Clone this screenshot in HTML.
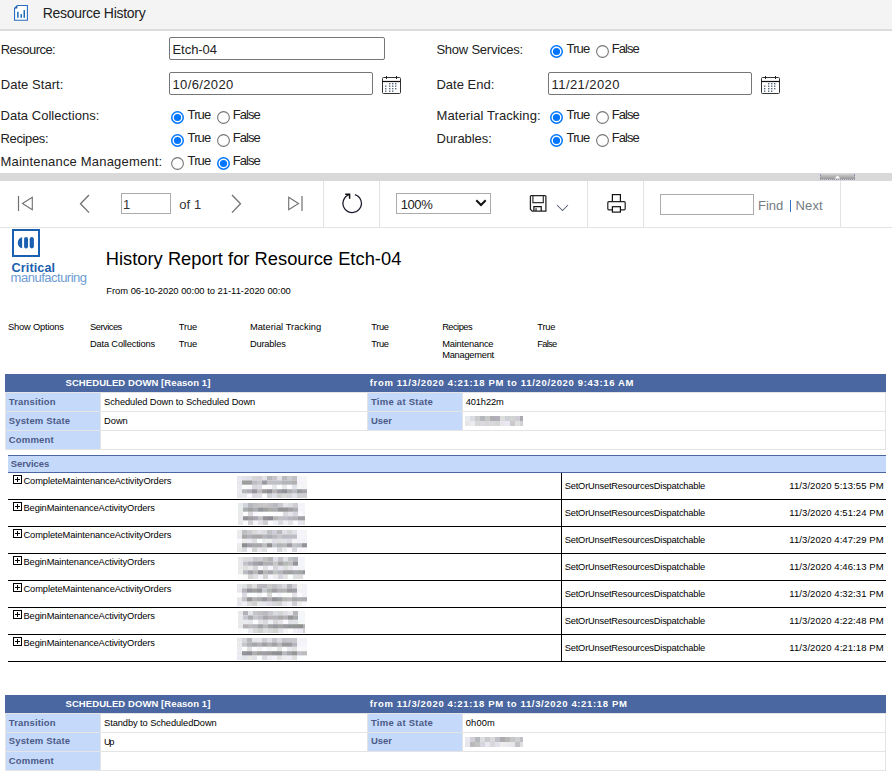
<!DOCTYPE html>
<html><head><meta charset="utf-8"><style>
html,body{margin:0;padding:0;background:#fff;width:892px;height:782px;overflow:hidden;position:relative}
body{font-family:"Liberation Sans", sans-serif}
.t{position:absolute;white-space:nowrap}
.r{position:absolute;display:block}
</style></head><body>
<div class="r" style="left:0px;top:0px;width:892px;height:29px;background:#f4f4f4"></div>
<div class="r" style="left:0px;top:29px;width:892px;height:2px;background:#dcdcdc"></div>
<svg class="r" style="left:14px;top:5px" width="15" height="17" viewBox="0 0 15 17"><path d="M3.3 0.55 H13.4 V15.25 H0.55 V3.3 Z" fill="#fff" stroke="#2a6cc0" stroke-width="1.1"/><path d="M0.5 3.4 L3.4 0.5 L3.4 3.4 Z" fill="#1f5faf"/><rect x="3.1" y="6.8" width="1.5" height="6" fill="#1f6bb8"/><rect x="6.5" y="9.1" width="1.5" height="3.7" fill="#1f6bb8"/><rect x="9.5" y="5.1" width="1.5" height="7.7" fill="#1f6bb8"/></svg>
<div class="t" style="left:42.70px;top:6px;font-size:14px;line-height:14px;color:#222;font-weight:400;letter-spacing:-0.293px;">Resource History</div>
<div class="t" style="left:0.70px;top:43px;font-size:13px;line-height:13px;color:#222;font-weight:400;letter-spacing:-0.525px;">Resource:</div>
<div class="r" style="left:169px;top:37px;width:216px;height:23px;border:1px solid #767676;border-radius:2px;box-sizing:border-box;background:#fff"></div>
<div class="t" style="left:172.50px;top:43px;font-size:13px;line-height:13px;color:#222;font-weight:400;letter-spacing:-0.050px;">Etch-04</div>
<div class="t" style="left:436.40px;top:43px;font-size:13px;line-height:13px;color:#222;font-weight:400;letter-spacing:-0.223px;">Show Services:</div>
<svg class="r" style="left:550px;top:45px" width="13" height="13" viewBox="0 0 13 13"><circle cx="6.5" cy="6.5" r="5.75" fill="#fff" stroke="#0075ff" stroke-width="1.5"/><circle cx="6.5" cy="6.5" r="3.6" fill="#0075ff"/></svg>
<div class="t" style="left:566.50px;top:42px;font-size:13px;line-height:13px;color:#222;font-weight:400;letter-spacing:-0.833px;">True</div>
<svg class="r" style="left:596px;top:45px" width="13" height="13" viewBox="0 0 13 13"><circle cx="6.5" cy="6.5" r="5.9" fill="#fff" stroke="#767676" stroke-width="1.1"/></svg>
<div class="t" style="left:611.70px;top:42px;font-size:13px;line-height:13px;color:#222;font-weight:400;letter-spacing:-0.925px;">False</div>
<div class="t" style="left:0.70px;top:78px;font-size:13px;line-height:13px;color:#222;font-weight:400;letter-spacing:0.050px;">Date Start:</div>
<div class="r" style="left:169px;top:72px;width:204px;height:23px;border:1px solid #767676;border-radius:2px;box-sizing:border-box;background:#fff"></div>
<div class="t" style="left:172.50px;top:78px;font-size:13px;line-height:13px;color:#222;font-weight:400;letter-spacing:0.363px;">10/6/2020</div>
<svg class="r" style="left:382px;top:76px" width="20" height="19" viewBox="0 0 20 19"><rect x="0.5" y="1.5" width="18" height="16" rx="1" fill="#fff" stroke="#333" stroke-width="1"/><line x1="0.5" y1="5.5" x2="18.5" y2="5.5" stroke="#111" stroke-width="1.2"/><line x1="4.5" y1="0" x2="4.5" y2="3" stroke="#222" stroke-width="1"/><line x1="14.5" y1="0" x2="14.5" y2="3" stroke="#222" stroke-width="1"/><rect x="7" y="7.0" width="1.4" height="1.4" fill="#5a6a80"/><rect x="10" y="7.0" width="1.4" height="1.4" fill="#5a6a80"/><rect x="13" y="7.0" width="1.4" height="1.4" fill="#5a6a80"/><rect x="3" y="9.5" width="1.4" height="1.4" fill="#5a6a80"/><rect x="7" y="9.5" width="1.4" height="1.4" fill="#5a6a80"/><rect x="10" y="9.5" width="1.4" height="1.4" fill="#5a6a80"/><rect x="13" y="9.5" width="1.4" height="1.4" fill="#5a6a80"/><rect x="3" y="12.0" width="1.4" height="1.4" fill="#5a6a80"/><rect x="7" y="12.0" width="1.4" height="1.4" fill="#5a6a80"/><rect x="10" y="12.0" width="1.4" height="1.4" fill="#5a6a80"/><rect x="13" y="12.0" width="1.4" height="1.4" fill="#5a6a80"/><rect x="3" y="14.5" width="1.4" height="1.4" fill="#5a6a80"/><rect x="7" y="14.5" width="1.4" height="1.4" fill="#5a6a80"/><rect x="10" y="14.5" width="1.4" height="1.4" fill="#5a6a80"/></svg>
<div class="t" style="left:436.40px;top:78px;font-size:13px;line-height:13px;color:#222;font-weight:400;letter-spacing:0.025px;">Date End:</div>
<div class="r" style="left:548px;top:72px;width:204px;height:23px;border:1px solid #767676;border-radius:2px;box-sizing:border-box;background:#fff"></div>
<div class="t" style="left:551.60px;top:78px;font-size:13px;line-height:13px;color:#222;font-weight:400;letter-spacing:0.422px;">11/21/2020</div>
<svg class="r" style="left:761px;top:76px" width="20" height="19" viewBox="0 0 20 19"><rect x="0.5" y="1.5" width="18" height="16" rx="1" fill="#fff" stroke="#333" stroke-width="1"/><line x1="0.5" y1="5.5" x2="18.5" y2="5.5" stroke="#111" stroke-width="1.2"/><line x1="4.5" y1="0" x2="4.5" y2="3" stroke="#222" stroke-width="1"/><line x1="14.5" y1="0" x2="14.5" y2="3" stroke="#222" stroke-width="1"/><rect x="7" y="7.0" width="1.4" height="1.4" fill="#5a6a80"/><rect x="10" y="7.0" width="1.4" height="1.4" fill="#5a6a80"/><rect x="13" y="7.0" width="1.4" height="1.4" fill="#5a6a80"/><rect x="3" y="9.5" width="1.4" height="1.4" fill="#5a6a80"/><rect x="7" y="9.5" width="1.4" height="1.4" fill="#5a6a80"/><rect x="10" y="9.5" width="1.4" height="1.4" fill="#5a6a80"/><rect x="13" y="9.5" width="1.4" height="1.4" fill="#5a6a80"/><rect x="3" y="12.0" width="1.4" height="1.4" fill="#5a6a80"/><rect x="7" y="12.0" width="1.4" height="1.4" fill="#5a6a80"/><rect x="10" y="12.0" width="1.4" height="1.4" fill="#5a6a80"/><rect x="13" y="12.0" width="1.4" height="1.4" fill="#5a6a80"/><rect x="3" y="14.5" width="1.4" height="1.4" fill="#5a6a80"/><rect x="7" y="14.5" width="1.4" height="1.4" fill="#5a6a80"/><rect x="10" y="14.5" width="1.4" height="1.4" fill="#5a6a80"/></svg>
<div class="t" style="left:0.50px;top:109px;font-size:13px;line-height:13px;color:#222;font-weight:400;letter-spacing:0.037px;">Data Collections:</div>
<svg class="r" style="left:171px;top:111px" width="13" height="13" viewBox="0 0 13 13"><circle cx="6.5" cy="6.5" r="5.75" fill="#fff" stroke="#0075ff" stroke-width="1.5"/><circle cx="6.5" cy="6.5" r="3.6" fill="#0075ff"/></svg>
<div class="t" style="left:187.50px;top:108px;font-size:13px;line-height:13px;color:#222;font-weight:400;letter-spacing:-0.833px;">True</div>
<svg class="r" style="left:217px;top:111px" width="13" height="13" viewBox="0 0 13 13"><circle cx="6.5" cy="6.5" r="5.9" fill="#fff" stroke="#767676" stroke-width="1.1"/></svg>
<div class="t" style="left:232.70px;top:108px;font-size:13px;line-height:13px;color:#222;font-weight:400;letter-spacing:-0.925px;">False</div>
<div class="t" style="left:436.60px;top:109px;font-size:13px;line-height:13px;color:#222;font-weight:400;letter-spacing:0.082px;">Material Tracking:</div>
<svg class="r" style="left:550px;top:111px" width="13" height="13" viewBox="0 0 13 13"><circle cx="6.5" cy="6.5" r="5.75" fill="#fff" stroke="#0075ff" stroke-width="1.5"/><circle cx="6.5" cy="6.5" r="3.6" fill="#0075ff"/></svg>
<div class="t" style="left:566.50px;top:108px;font-size:13px;line-height:13px;color:#222;font-weight:400;letter-spacing:-0.833px;">True</div>
<svg class="r" style="left:596px;top:111px" width="13" height="13" viewBox="0 0 13 13"><circle cx="6.5" cy="6.5" r="5.9" fill="#fff" stroke="#767676" stroke-width="1.1"/></svg>
<div class="t" style="left:611.70px;top:108px;font-size:13px;line-height:13px;color:#222;font-weight:400;letter-spacing:-0.925px;">False</div>
<div class="t" style="left:0.50px;top:132px;font-size:13px;line-height:13px;color:#222;font-weight:400;letter-spacing:-0.357px;">Recipes:</div>
<svg class="r" style="left:171px;top:134px" width="13" height="13" viewBox="0 0 13 13"><circle cx="6.5" cy="6.5" r="5.75" fill="#fff" stroke="#0075ff" stroke-width="1.5"/><circle cx="6.5" cy="6.5" r="3.6" fill="#0075ff"/></svg>
<div class="t" style="left:187.50px;top:131px;font-size:13px;line-height:13px;color:#222;font-weight:400;letter-spacing:-0.833px;">True</div>
<svg class="r" style="left:217px;top:134px" width="13" height="13" viewBox="0 0 13 13"><circle cx="6.5" cy="6.5" r="5.9" fill="#fff" stroke="#767676" stroke-width="1.1"/></svg>
<div class="t" style="left:232.70px;top:131px;font-size:13px;line-height:13px;color:#222;font-weight:400;letter-spacing:-0.925px;">False</div>
<div class="t" style="left:436.60px;top:132px;font-size:13px;line-height:13px;color:#222;font-weight:400;letter-spacing:-0.050px;">Durables:</div>
<svg class="r" style="left:550px;top:134px" width="13" height="13" viewBox="0 0 13 13"><circle cx="6.5" cy="6.5" r="5.75" fill="#fff" stroke="#0075ff" stroke-width="1.5"/><circle cx="6.5" cy="6.5" r="3.6" fill="#0075ff"/></svg>
<div class="t" style="left:566.50px;top:131px;font-size:13px;line-height:13px;color:#222;font-weight:400;letter-spacing:-0.833px;">True</div>
<svg class="r" style="left:596px;top:134px" width="13" height="13" viewBox="0 0 13 13"><circle cx="6.5" cy="6.5" r="5.9" fill="#fff" stroke="#767676" stroke-width="1.1"/></svg>
<div class="t" style="left:611.70px;top:131px;font-size:13px;line-height:13px;color:#222;font-weight:400;letter-spacing:-0.925px;">False</div>
<div class="t" style="left:0.50px;top:155px;font-size:13px;line-height:13px;color:#222;font-weight:400;letter-spacing:0.186px;">Maintenance Management:</div>
<svg class="r" style="left:171px;top:157px" width="13" height="13" viewBox="0 0 13 13"><circle cx="6.5" cy="6.5" r="5.9" fill="#fff" stroke="#767676" stroke-width="1.1"/></svg>
<div class="t" style="left:187.50px;top:154px;font-size:13px;line-height:13px;color:#222;font-weight:400;letter-spacing:-0.833px;">True</div>
<svg class="r" style="left:217px;top:157px" width="13" height="13" viewBox="0 0 13 13"><circle cx="6.5" cy="6.5" r="5.75" fill="#fff" stroke="#0075ff" stroke-width="1.5"/><circle cx="6.5" cy="6.5" r="3.6" fill="#0075ff"/></svg>
<div class="t" style="left:232.70px;top:154px;font-size:13px;line-height:13px;color:#222;font-weight:400;letter-spacing:-0.925px;">False</div>
<div class="r" style="left:0px;top:173px;width:892px;height:8px;background:#d9d9d9"></div>
<div class="r" style="left:820px;top:174px;width:35px;height:6px;background:linear-gradient(#d0d0d0,#989898);border:1px dotted #9a92b4;border-top:none;box-sizing:border-box"></div>
<svg class="r" style="left:834px;top:174.5px" width="7" height="4"><path d="M0.6 3.6 L3.5 0.4 L6.4 3.6 Z" fill="#fff"/></svg>
<div class="r" style="left:0px;top:227px;width:892px;height:1px;background:#e3e3e3"></div>
<div class="r" style="left:323px;top:181px;width:1px;height:46px;background:#e3e3e3"></div>
<div class="r" style="left:379px;top:181px;width:1px;height:46px;background:#e3e3e3"></div>
<div class="r" style="left:587px;top:181px;width:1px;height:46px;background:#e3e3e3"></div>
<div class="r" style="left:643px;top:181px;width:1px;height:46px;background:#e3e3e3"></div>
<div class="r" style="left:840px;top:181px;width:1px;height:46px;background:#e3e3e3"></div>
<svg class="r" style="left:17px;top:195px" width="18" height="18" viewBox="0 0 18 18"><line x1="1.5" y1="1" x2="1.5" y2="16" stroke="#707070" stroke-width="1.2"/><path d="M5.5 8.5 L15.3 2.3 V14.7 Z" fill="none" stroke="#707070" stroke-width="1.1"/></svg>
<svg class="r" style="left:78px;top:194px" width="14" height="20" viewBox="0 0 14 20"><path d="M11 1 L2.5 9.8 L11 18.6" fill="none" stroke="#707070" stroke-width="1.3"/></svg>
<div class="r" style="left:121px;top:193px;width:50px;height:21px;border:1px solid #ababab;box-sizing:border-box;background:#fff"></div>
<div class="t" style="left:123.00px;top:198px;font-size:13px;line-height:13px;color:#333;font-weight:400;letter-spacing:0.000px;">1</div>
<div class="t" style="left:179.30px;top:198px;font-size:13px;line-height:13px;color:#333;font-weight:400;letter-spacing:0.067px;">of 1</div>
<svg class="r" style="left:229px;top:194px" width="14" height="20" viewBox="0 0 14 20"><path d="M3 1 L11.5 9.8 L3 18.6" fill="none" stroke="#707070" stroke-width="1.3"/></svg>
<svg class="r" style="left:286px;top:195px" width="18" height="18" viewBox="0 0 18 18"><path d="M2.7 2.3 L12.5 8.5 L2.7 14.7 Z" fill="none" stroke="#707070" stroke-width="1.1"/><line x1="16" y1="1" x2="16" y2="16" stroke="#707070" stroke-width="1.2"/></svg>
<svg class="r" style="left:340px;top:192px" width="24" height="23" viewBox="0 0 24 23"><path d="M9.3 2.6 A9.2 9.2 0 1 0 14.9 2.55" fill="none" stroke="#1a1a2a" stroke-width="1.25"/><path d="M5.2 2.3 H9.6 V6.7" fill="none" stroke="#111" stroke-width="1.5" stroke-linejoin="miter"/></svg>
<div class="r" style="left:396px;top:193px;width:95px;height:21px;border:1px solid #ababab;box-sizing:border-box;background:#fff"></div>
<div class="t" style="left:400.70px;top:198px;font-size:13px;line-height:13px;color:#222;font-weight:400;letter-spacing:-0.400px;">100%</div>
<svg class="r" style="left:475px;top:199px" width="12" height="8" viewBox="0 0 12 8"><path d="M1.3 1.3 L6 6 L10.7 1.3" fill="none" stroke="#111" stroke-width="2"/></svg>
<svg class="r" style="left:529px;top:194px" width="19" height="19" viewBox="0 0 19 19"><path d="M2.3 1.6 H16 Q16.9 1.6 16.9 2.5 V17.1 H3.2 L1.4 15.3 V2.5 Q1.4 1.6 2.3 1.6 Z" fill="#fff" stroke="#222" stroke-width="1.25"/><path d="M3.9 1.8 V8.6 H14.3 V1.8" fill="none" stroke="#333" stroke-width="1.2"/><path d="M4.9 17 V12.7 H12.2 V17" fill="none" stroke="#111" stroke-width="1.2"/><rect x="6.4" y="14.2" width="1.3" height="2.9" fill="#333"/></svg>
<svg class="r" style="left:556px;top:204px" width="13" height="8" viewBox="0 0 13 8"><path d="M1 1 L6.5 6.5 L12 1" fill="none" stroke="#556070" stroke-width="1.05"/></svg>
<svg class="r" style="left:606px;top:193px" width="21" height="21" viewBox="0 0 21 21"><rect x="6.4" y="1.6" width="8" height="7.5" fill="#fff" stroke="#111" stroke-width="1.2"/><rect x="1.8" y="8.7" width="17.4" height="8.1" rx="1" fill="#fff" stroke="#222" stroke-width="1.2"/><rect x="6.4" y="13.7" width="8" height="5.4" fill="#fff" stroke="#111" stroke-width="1.2"/></svg>
<div class="r" style="left:660px;top:194px;width:94px;height:21px;border:1px solid #ababab;box-sizing:border-box;background:#fff"></div>
<div class="t" style="left:758.00px;top:199px;font-size:13px;line-height:13px;color:#737b84;font-weight:400;letter-spacing:0.000px;">Find</div>
<div class="r" style="left:789.5px;top:199.5px;width:1.6px;height:12.5px;background:#2f72c0"></div>
<div class="t" style="left:795.50px;top:199px;font-size:13px;line-height:13px;color:#737b84;font-weight:400;letter-spacing:0.167px;">Next</div>
<div class="r" style="left:12px;top:229px;width:28px;height:28px;border:2.1px solid #1a60b0;box-sizing:border-box"></div>
<svg class="r" style="left:17px;top:236px" width="18" height="14" viewBox="0 0 18 14"><path d="M5.1 1.3 A4.3 5.45 0 0 0 5.1 12.2 Z" fill="#1a60b0"/><rect x="7.1" y="0.9" width="3.9" height="11.5" rx="1.95" fill="#1a60b0"/><rect x="12.7" y="1.1" width="4.2" height="11.3" rx="2.1" fill="#1a60b0"/></svg>
<div class="t" style="left:11.60px;top:262px;font-size:12.6px;line-height:12.6px;color:#1a60b0;font-weight:700;letter-spacing:0.114px;">Critical</div>
<div class="t" style="left:10.60px;top:271px;font-size:13px;line-height:13px;color:#6d9cd3;font-weight:400;letter-spacing:-0.492px;">manufacturing</div>
<div class="t" style="left:105.70px;top:250px;font-size:18.3px;line-height:18.3px;color:#000;font-weight:400;letter-spacing:0.029px;">History Report for Resource Etch-04</div>
<div class="t" style="left:106.20px;top:286px;font-size:9.4px;line-height:9.4px;color:#000;font-weight:400;letter-spacing:-0.005px;">From 06-10-2020 00:00 to 21-11-2020 00:00</div>
<div class="t" style="left:7.90px;top:323px;font-size:9.3px;line-height:9.3px;color:#000;font-weight:400;letter-spacing:-0.164px;">Show Options</div>
<div class="t" style="left:90.00px;top:323px;font-size:9.3px;line-height:9.3px;color:#000;font-weight:400;letter-spacing:-0.486px;">Services</div>
<div class="t" style="left:178.80px;top:323px;font-size:9.3px;line-height:9.3px;color:#000;font-weight:400;letter-spacing:-0.167px;">True</div>
<div class="t" style="left:249.90px;top:323px;font-size:9.3px;line-height:9.3px;color:#000;font-weight:400;letter-spacing:0.031px;">Material Tracking</div>
<div class="t" style="left:371.30px;top:323px;font-size:9.3px;line-height:9.3px;color:#000;font-weight:400;letter-spacing:-0.367px;">True</div>
<div class="t" style="left:442.20px;top:323px;font-size:9.3px;line-height:9.3px;color:#000;font-weight:400;letter-spacing:-0.533px;">Recipes</div>
<div class="t" style="left:537.30px;top:323px;font-size:9.3px;line-height:9.3px;color:#000;font-weight:400;letter-spacing:-0.233px;">True</div>
<div class="t" style="left:90.00px;top:340px;font-size:9.3px;line-height:9.3px;color:#000;font-weight:400;letter-spacing:-0.173px;">Data Collections</div>
<div class="t" style="left:178.80px;top:340px;font-size:9.3px;line-height:9.3px;color:#000;font-weight:400;letter-spacing:-0.167px;">True</div>
<div class="t" style="left:249.90px;top:340px;font-size:9.3px;line-height:9.3px;color:#000;font-weight:400;letter-spacing:-0.171px;">Durables</div>
<div class="t" style="left:371.30px;top:340px;font-size:9.3px;line-height:9.3px;color:#000;font-weight:400;letter-spacing:-0.367px;">True</div>
<div class="t" style="left:442.20px;top:340px;font-size:9.3px;line-height:9.3px;color:#000;font-weight:400;letter-spacing:-0.190px;">Maintenance</div>
<div class="t" style="left:442.20px;top:351px;font-size:9.3px;line-height:9.3px;color:#000;font-weight:400;letter-spacing:-0.256px;">Management</div>
<div class="t" style="left:537.30px;top:340px;font-size:9.3px;line-height:9.3px;color:#000;font-weight:400;letter-spacing:-0.725px;">False</div>
<div class="r" style="left:5px;top:374px;width:881px;height:18px;background:#4a67a1"></div>
<div class="t" style="left:65.50px;top:378px;font-size:9.5px;line-height:9.5px;color:#fff;font-weight:700;letter-spacing:0.075px;">SCHEDULED DOWN [Reason 1]</div>
<div class="t" style="left:369.80px;top:378px;font-size:9.5px;line-height:9.5px;color:#fff;font-weight:700;letter-spacing:0.657px;">from 11/3/2020 4:21:18 PM to 11/20/2020 9:43:16 AM</div>
<div class="r" style="left:5px;top:392px;width:881px;height:58px;background:#fff;border:1px solid #e4e4e4;box-sizing:border-box"></div>
<div class="r" style="left:6px;top:393px;width:94px;height:56px;background:#c5d9fb"></div>
<div class="r" style="left:368px;top:393px;width:94px;height:37px;background:#c5d9fb"></div>
<div class="r" style="left:5px;top:411px;width:881px;height:1px;background:#e4e4e4"></div>
<div class="r" style="left:5px;top:430px;width:881px;height:1px;background:#e4e4e4"></div>
<div class="r" style="left:100px;top:392px;width:1px;height:58px;background:#e4e4e4"></div>
<div class="r" style="left:462px;top:392px;width:1px;height:38px;background:#e4e4e4"></div>
<div class="r" style="left:367px;top:392px;width:1px;height:38px;background:#e4e4e4"></div>
<div class="t" style="left:8.75px;top:397px;font-size:9.5px;line-height:9.5px;color:#4b5a86;font-weight:700;letter-spacing:0.161px;">Transition</div>
<div class="t" style="left:8.75px;top:416px;font-size:9.5px;line-height:9.5px;color:#4b5a86;font-weight:700;letter-spacing:0.141px;">System State</div>
<div class="t" style="left:8.75px;top:435px;font-size:9.5px;line-height:9.5px;color:#4b5a86;font-weight:700;letter-spacing:0.175px;">Comment</div>
<div class="t" style="left:371.00px;top:397px;font-size:9.5px;line-height:9.5px;color:#4b5a86;font-weight:700;letter-spacing:0.242px;">Time at State</div>
<div class="t" style="left:371.00px;top:416px;font-size:9.5px;line-height:9.5px;color:#4b5a86;font-weight:700;letter-spacing:-0.067px;">User</div>
<div class="t" style="left:104.10px;top:398px;font-size:9.3px;line-height:9.3px;color:#000;font-weight:400;letter-spacing:-0.077px;">Scheduled Down to Scheduled Down</div>
<div class="t" style="left:104.10px;top:417px;font-size:9.3px;line-height:9.3px;color:#000;font-weight:400;letter-spacing:-0.033px;">Down</div>
<div class="t" style="left:465.80px;top:398px;font-size:9.3px;line-height:9.3px;color:#000;font-weight:400;letter-spacing:-0.150px;">401h22m</div>
<svg class="r" style="left:465px;top:416px" width="58" height="10"><rect x="0" y="0.00" width="5" height="5.05" fill="rgb(232,235,240)"/><rect x="5" y="0.00" width="5" height="5.05" fill="rgb(218,218,225)"/><rect x="10" y="0.00" width="5" height="5.05" fill="rgb(201,204,204)"/><rect x="15" y="0.00" width="5" height="5.05" fill="rgb(180,183,188)"/><rect x="20" y="0.00" width="5" height="5.05" fill="rgb(199,201,201)"/><rect x="25" y="0.00" width="5" height="5.05" fill="rgb(175,175,179)"/><rect x="30" y="0.00" width="5" height="5.05" fill="rgb(178,175,186)"/><rect x="35" y="0.00" width="5" height="5.05" fill="rgb(220,222,220)"/><rect x="40" y="0.00" width="5" height="5.05" fill="rgb(207,207,214)"/><rect x="45" y="0.00" width="5" height="5.05" fill="rgb(210,212,212)"/><rect x="50" y="0.00" width="5" height="5.05" fill="rgb(208,205,216)"/><rect x="55" y="0.00" width="5" height="5.05" fill="rgb(173,170,173)"/><rect x="0" y="5.00" width="5" height="5.05" fill="rgb(232,230,232)"/><rect x="5" y="5.00" width="5" height="5.05" fill="rgb(235,235,240)"/><rect x="10" y="5.00" width="5" height="5.05" fill="rgb(214,215,217)"/><rect x="15" y="5.00" width="5" height="5.05" fill="rgb(219,217,223)"/><rect x="20" y="5.00" width="5" height="5.05" fill="rgb(217,214,218)"/><rect x="25" y="5.00" width="5" height="5.05" fill="rgb(215,217,219)"/><rect x="30" y="5.00" width="5" height="5.05" fill="rgb(212,213,213)"/><rect x="35" y="5.00" width="5" height="5.05" fill="rgb(231,230,236)"/><rect x="40" y="5.00" width="5" height="5.05" fill="rgb(234,232,242)"/><rect x="45" y="5.00" width="5" height="5.05" fill="rgb(204,201,205)"/><rect x="50" y="5.00" width="5" height="5.05" fill="rgb(222,225,223)"/><rect x="55" y="5.00" width="5" height="5.05" fill="rgb(211,208,215)"/></svg>
<div class="r" style="left:8px;top:455px;width:878px;height:18px;background:#c5d9fb;border-top:1px solid #4a67a1;border-bottom:1.5px solid #4a67a1;box-sizing:border-box"></div>
<div class="t" style="left:10.75px;top:459px;font-size:9.5px;line-height:9.5px;color:#4b5a86;font-weight:700;letter-spacing:-0.093px;">Services</div>
<div class="r" style="left:561px;top:473px;width:1px;height:188px;background:#000"></div>
<svg class="r" style="left:13px;top:475px" width="9" height="9" viewBox="0 0 9 9"><rect x="0.5" y="0.5" width="8" height="8" fill="#fff" stroke="#000" stroke-width="1"/><path d="M2 4.5 H7 M4.5 2 V7" stroke="#000" stroke-width="1"/></svg>
<div class="t" style="left:23.50px;top:477px;font-size:9.3px;line-height:9.3px;color:#000;font-weight:400;letter-spacing:-0.094px;">CompleteMaintenanceActivityOrders</div>
<svg class="r" style="left:237px;top:476px" width="70" height="22"><rect x="0" y="0.00" width="5" height="4.45" fill="rgb(232,232,239)"/><rect x="5" y="0.00" width="5" height="4.45" fill="rgb(228,226,234)"/><rect x="10" y="0.00" width="5" height="4.45" fill="rgb(225,224,231)"/><rect x="15" y="0.00" width="5" height="4.45" fill="rgb(211,214,212)"/><rect x="20" y="0.00" width="5" height="4.45" fill="rgb(213,210,214)"/><rect x="25" y="0.00" width="5" height="4.45" fill="rgb(226,226,230)"/><rect x="30" y="0.00" width="5" height="4.45" fill="rgb(182,184,185)"/><rect x="35" y="0.00" width="5" height="4.45" fill="rgb(200,198,204)"/><rect x="40" y="0.00" width="5" height="4.45" fill="rgb(228,226,230)"/><rect x="45" y="0.00" width="5" height="4.45" fill="rgb(188,186,193)"/><rect x="50" y="0.00" width="5" height="4.45" fill="rgb(202,204,208)"/><rect x="55" y="0.00" width="5" height="4.45" fill="rgb(192,192,199)"/><rect x="60" y="0.00" width="5" height="4.45" fill="rgb(244,243,250)"/><rect x="65" y="0.00" width="5" height="4.45" fill="rgb(244,247,245)"/><rect x="0" y="4.40" width="5" height="4.45" fill="rgb(232,229,238)"/><rect x="5" y="4.40" width="5" height="4.45" fill="rgb(155,158,157)"/><rect x="10" y="4.40" width="5" height="4.45" fill="rgb(158,156,158)"/><rect x="15" y="4.40" width="5" height="4.45" fill="rgb(188,186,195)"/><rect x="20" y="4.40" width="5" height="4.45" fill="rgb(197,199,203)"/><rect x="25" y="4.40" width="5" height="4.45" fill="rgb(154,155,162)"/><rect x="30" y="4.40" width="5" height="4.45" fill="rgb(194,191,197)"/><rect x="35" y="4.40" width="5" height="4.45" fill="rgb(191,192,199)"/><rect x="40" y="4.40" width="5" height="4.45" fill="rgb(191,190,196)"/><rect x="45" y="4.40" width="5" height="4.45" fill="rgb(179,181,184)"/><rect x="50" y="4.40" width="5" height="4.45" fill="rgb(180,183,185)"/><rect x="55" y="4.40" width="5" height="4.45" fill="rgb(176,176,176)"/><rect x="60" y="4.40" width="5" height="4.45" fill="rgb(244,241,248)"/><rect x="65" y="4.40" width="5" height="4.45" fill="rgb(244,244,248)"/><rect x="0" y="8.80" width="5" height="4.45" fill="rgb(232,235,238)"/><rect x="5" y="8.80" width="5" height="4.45" fill="rgb(252,253,255)"/><rect x="10" y="8.80" width="5" height="4.45" fill="rgb(249,248,251)"/><rect x="15" y="8.80" width="5" height="4.45" fill="rgb(215,217,220)"/><rect x="20" y="8.80" width="5" height="4.45" fill="rgb(222,219,226)"/><rect x="25" y="8.80" width="5" height="4.45" fill="rgb(252,254,253)"/><rect x="30" y="8.80" width="5" height="4.45" fill="rgb(252,249,255)"/><rect x="35" y="8.80" width="5" height="4.45" fill="rgb(231,232,234)"/><rect x="40" y="8.80" width="5" height="4.45" fill="rgb(252,255,255)"/><rect x="45" y="8.80" width="5" height="4.45" fill="rgb(233,233,233)"/><rect x="50" y="8.80" width="5" height="4.45" fill="rgb(252,249,255)"/><rect x="55" y="8.80" width="5" height="4.45" fill="rgb(224,227,232)"/><rect x="60" y="8.80" width="5" height="4.45" fill="rgb(244,246,247)"/><rect x="65" y="8.80" width="5" height="4.45" fill="rgb(244,244,245)"/><rect x="0" y="13.20" width="5" height="4.45" fill="rgb(232,234,234)"/><rect x="5" y="13.20" width="5" height="4.45" fill="rgb(181,183,188)"/><rect x="10" y="13.20" width="5" height="4.45" fill="rgb(176,173,183)"/><rect x="15" y="13.20" width="5" height="4.45" fill="rgb(152,149,159)"/><rect x="20" y="13.20" width="5" height="4.45" fill="rgb(190,187,193)"/><rect x="25" y="13.20" width="5" height="4.45" fill="rgb(157,155,158)"/><rect x="30" y="13.20" width="5" height="4.45" fill="rgb(144,142,147)"/><rect x="35" y="13.20" width="5" height="4.45" fill="rgb(183,180,184)"/><rect x="40" y="13.20" width="5" height="4.45" fill="rgb(158,155,164)"/><rect x="45" y="13.20" width="5" height="4.45" fill="rgb(144,145,150)"/><rect x="50" y="13.20" width="5" height="4.45" fill="rgb(172,172,177)"/><rect x="55" y="13.20" width="5" height="4.45" fill="rgb(186,186,194)"/><rect x="60" y="13.20" width="5" height="4.45" fill="rgb(154,155,158)"/><rect x="65" y="13.20" width="5" height="4.45" fill="rgb(168,166,171)"/><rect x="0" y="17.60" width="5" height="4.45" fill="rgb(232,229,236)"/><rect x="5" y="17.60" width="5" height="4.45" fill="rgb(231,234,235)"/><rect x="10" y="17.60" width="5" height="4.45" fill="rgb(251,248,254)"/><rect x="15" y="17.60" width="5" height="4.45" fill="rgb(220,217,226)"/><rect x="20" y="17.60" width="5" height="4.45" fill="rgb(223,220,227)"/><rect x="25" y="17.60" width="5" height="4.45" fill="rgb(252,251,252)"/><rect x="30" y="17.60" width="5" height="4.45" fill="rgb(207,210,215)"/><rect x="35" y="17.60" width="5" height="4.45" fill="rgb(224,222,230)"/><rect x="40" y="17.60" width="5" height="4.45" fill="rgb(206,208,207)"/><rect x="45" y="17.60" width="5" height="4.45" fill="rgb(220,219,220)"/><rect x="50" y="17.60" width="5" height="4.45" fill="rgb(211,214,216)"/><rect x="55" y="17.60" width="5" height="4.45" fill="rgb(226,228,233)"/><rect x="60" y="17.60" width="5" height="4.45" fill="rgb(208,210,210)"/><rect x="65" y="17.60" width="5" height="4.45" fill="rgb(211,208,216)"/></svg>
<div class="t" style="left:564.80px;top:482px;font-size:9.3px;line-height:9.3px;color:#000;font-weight:400;letter-spacing:-0.210px;">SetOrUnsetResourcesDispatchable</div>
<div class="t" style="left:789.30px;top:481px;font-size:9.5px;line-height:9.5px;color:#000;font-weight:400;letter-spacing:0.079px;">11/3/2020 5:13:55 PM</div>
<div class="r" style="left:8px;top:499px;width:878px;height:1.3px;background:#000"></div>
<svg class="r" style="left:13px;top:502px" width="9" height="9" viewBox="0 0 9 9"><rect x="0.5" y="0.5" width="8" height="8" fill="#fff" stroke="#000" stroke-width="1"/><path d="M2 4.5 H7 M4.5 2 V7" stroke="#000" stroke-width="1"/></svg>
<div class="t" style="left:23.50px;top:504px;font-size:9.3px;line-height:9.3px;color:#000;font-weight:400;letter-spacing:-0.121px;">BeginMaintenanceActivityOrders</div>
<svg class="r" style="left:238px;top:503px" width="67" height="22"><rect x="0" y="0.00" width="5" height="4.45" fill="rgb(232,235,235)"/><rect x="5" y="0.00" width="5" height="4.45" fill="rgb(213,212,220)"/><rect x="10" y="0.00" width="5" height="4.45" fill="rgb(182,184,190)"/><rect x="15" y="0.00" width="5" height="4.45" fill="rgb(192,193,195)"/><rect x="20" y="0.00" width="5" height="4.45" fill="rgb(197,197,200)"/><rect x="25" y="0.00" width="5" height="4.45" fill="rgb(200,200,201)"/><rect x="30" y="0.00" width="5" height="4.45" fill="rgb(195,193,197)"/><rect x="35" y="0.00" width="5" height="4.45" fill="rgb(184,184,192)"/><rect x="40" y="0.00" width="5" height="4.45" fill="rgb(202,200,209)"/><rect x="45" y="0.00" width="5" height="4.45" fill="rgb(229,228,232)"/><rect x="50" y="0.00" width="5" height="4.45" fill="rgb(219,222,225)"/><rect x="55" y="0.00" width="5" height="4.45" fill="rgb(206,204,207)"/><rect x="60" y="0.00" width="5" height="4.45" fill="rgb(244,244,248)"/><rect x="65" y="0.00" width="5" height="4.45" fill="rgb(244,241,249)"/><rect x="0" y="4.40" width="5" height="4.45" fill="rgb(232,235,236)"/><rect x="5" y="4.40" width="5" height="4.45" fill="rgb(171,174,177)"/><rect x="10" y="4.40" width="5" height="4.45" fill="rgb(160,160,161)"/><rect x="15" y="4.40" width="5" height="4.45" fill="rgb(171,173,177)"/><rect x="20" y="4.40" width="5" height="4.45" fill="rgb(146,149,153)"/><rect x="25" y="4.40" width="5" height="4.45" fill="rgb(159,160,160)"/><rect x="30" y="4.40" width="5" height="4.45" fill="rgb(168,171,168)"/><rect x="35" y="4.40" width="5" height="4.45" fill="rgb(169,171,174)"/><rect x="40" y="4.40" width="5" height="4.45" fill="rgb(146,145,148)"/><rect x="45" y="4.40" width="5" height="4.45" fill="rgb(148,148,150)"/><rect x="50" y="4.40" width="5" height="4.45" fill="rgb(163,160,165)"/><rect x="55" y="4.40" width="5" height="4.45" fill="rgb(171,173,176)"/><rect x="60" y="4.40" width="5" height="4.45" fill="rgb(244,245,251)"/><rect x="65" y="4.40" width="5" height="4.45" fill="rgb(244,244,252)"/><rect x="0" y="8.80" width="5" height="4.45" fill="rgb(232,235,234)"/><rect x="5" y="8.80" width="5" height="4.45" fill="rgb(252,253,252)"/><rect x="10" y="8.80" width="5" height="4.45" fill="rgb(217,214,217)"/><rect x="15" y="8.80" width="5" height="4.45" fill="rgb(248,247,255)"/><rect x="20" y="8.80" width="5" height="4.45" fill="rgb(252,252,253)"/><rect x="25" y="8.80" width="5" height="4.45" fill="rgb(252,254,255)"/><rect x="30" y="8.80" width="5" height="4.45" fill="rgb(252,254,254)"/><rect x="35" y="8.80" width="5" height="4.45" fill="rgb(252,250,255)"/><rect x="40" y="8.80" width="5" height="4.45" fill="rgb(252,253,255)"/><rect x="45" y="8.80" width="5" height="4.45" fill="rgb(220,217,222)"/><rect x="50" y="8.80" width="5" height="4.45" fill="rgb(231,230,237)"/><rect x="55" y="8.80" width="5" height="4.45" fill="rgb(216,213,224)"/><rect x="60" y="8.80" width="5" height="4.45" fill="rgb(247,249,252)"/><rect x="65" y="8.80" width="5" height="4.45" fill="rgb(244,241,247)"/><rect x="0" y="13.20" width="5" height="4.45" fill="rgb(232,234,237)"/><rect x="5" y="13.20" width="5" height="4.45" fill="rgb(147,146,149)"/><rect x="10" y="13.20" width="5" height="4.45" fill="rgb(158,158,161)"/><rect x="15" y="13.20" width="5" height="4.45" fill="rgb(169,166,177)"/><rect x="20" y="13.20" width="5" height="4.45" fill="rgb(193,192,196)"/><rect x="25" y="13.20" width="5" height="4.45" fill="rgb(148,147,150)"/><rect x="30" y="13.20" width="5" height="4.45" fill="rgb(142,139,148)"/><rect x="35" y="13.20" width="5" height="4.45" fill="rgb(181,181,181)"/><rect x="40" y="13.20" width="5" height="4.45" fill="rgb(193,192,196)"/><rect x="45" y="13.20" width="5" height="4.45" fill="rgb(192,191,199)"/><rect x="50" y="13.20" width="5" height="4.45" fill="rgb(184,182,192)"/><rect x="55" y="13.20" width="5" height="4.45" fill="rgb(179,180,184)"/><rect x="60" y="13.20" width="5" height="4.45" fill="rgb(163,160,165)"/><rect x="65" y="13.20" width="5" height="4.45" fill="rgb(160,159,165)"/><rect x="0" y="17.60" width="5" height="4.45" fill="rgb(232,232,232)"/><rect x="5" y="17.60" width="5" height="4.45" fill="rgb(252,250,255)"/><rect x="10" y="17.60" width="5" height="4.45" fill="rgb(210,208,212)"/><rect x="15" y="17.60" width="5" height="4.45" fill="rgb(248,245,250)"/><rect x="20" y="17.60" width="5" height="4.45" fill="rgb(227,224,232)"/><rect x="25" y="17.60" width="5" height="4.45" fill="rgb(207,207,210)"/><rect x="30" y="17.60" width="5" height="4.45" fill="rgb(249,251,254)"/><rect x="35" y="17.60" width="5" height="4.45" fill="rgb(238,240,246)"/><rect x="40" y="17.60" width="5" height="4.45" fill="rgb(219,217,226)"/><rect x="45" y="17.60" width="5" height="4.45" fill="rgb(240,241,245)"/><rect x="50" y="17.60" width="5" height="4.45" fill="rgb(225,227,229)"/><rect x="55" y="17.60" width="5" height="4.45" fill="rgb(252,251,255)"/><rect x="60" y="17.60" width="5" height="4.45" fill="rgb(233,231,240)"/><rect x="65" y="17.60" width="5" height="4.45" fill="rgb(225,228,225)"/></svg>
<div class="t" style="left:564.80px;top:509px;font-size:9.3px;line-height:9.3px;color:#000;font-weight:400;letter-spacing:-0.210px;">SetOrUnsetResourcesDispatchable</div>
<div class="t" style="left:789.30px;top:508px;font-size:9.5px;line-height:9.5px;color:#000;font-weight:400;letter-spacing:0.079px;">11/3/2020 4:51:24 PM</div>
<div class="r" style="left:8px;top:526px;width:878px;height:1.3px;background:#000"></div>
<svg class="r" style="left:13px;top:529px" width="9" height="9" viewBox="0 0 9 9"><rect x="0.5" y="0.5" width="8" height="8" fill="#fff" stroke="#000" stroke-width="1"/><path d="M2 4.5 H7 M4.5 2 V7" stroke="#000" stroke-width="1"/></svg>
<div class="t" style="left:23.50px;top:531px;font-size:9.3px;line-height:9.3px;color:#000;font-weight:400;letter-spacing:-0.094px;">CompleteMaintenanceActivityOrders</div>
<svg class="r" style="left:237px;top:530px" width="70" height="22"><rect x="0" y="0.00" width="5" height="4.45" fill="rgb(232,234,237)"/><rect x="5" y="0.00" width="5" height="4.45" fill="rgb(189,190,191)"/><rect x="10" y="0.00" width="5" height="4.45" fill="rgb(203,202,209)"/><rect x="15" y="0.00" width="5" height="4.45" fill="rgb(215,216,215)"/><rect x="20" y="0.00" width="5" height="4.45" fill="rgb(225,226,233)"/><rect x="25" y="0.00" width="5" height="4.45" fill="rgb(218,220,226)"/><rect x="30" y="0.00" width="5" height="4.45" fill="rgb(190,192,196)"/><rect x="35" y="0.00" width="5" height="4.45" fill="rgb(207,205,215)"/><rect x="40" y="0.00" width="5" height="4.45" fill="rgb(187,184,187)"/><rect x="45" y="0.00" width="5" height="4.45" fill="rgb(223,221,230)"/><rect x="50" y="0.00" width="5" height="4.45" fill="rgb(211,214,214)"/><rect x="55" y="0.00" width="5" height="4.45" fill="rgb(224,225,232)"/><rect x="60" y="0.00" width="5" height="4.45" fill="rgb(244,244,250)"/><rect x="65" y="0.00" width="5" height="4.45" fill="rgb(244,244,245)"/><rect x="0" y="4.40" width="5" height="4.45" fill="rgb(232,233,233)"/><rect x="5" y="4.40" width="5" height="4.45" fill="rgb(167,167,170)"/><rect x="10" y="4.40" width="5" height="4.45" fill="rgb(178,178,184)"/><rect x="15" y="4.40" width="5" height="4.45" fill="rgb(171,169,173)"/><rect x="20" y="4.40" width="5" height="4.45" fill="rgb(169,167,170)"/><rect x="25" y="4.40" width="5" height="4.45" fill="rgb(183,181,187)"/><rect x="30" y="4.40" width="5" height="4.45" fill="rgb(173,171,181)"/><rect x="35" y="4.40" width="5" height="4.45" fill="rgb(185,185,189)"/><rect x="40" y="4.40" width="5" height="4.45" fill="rgb(198,197,205)"/><rect x="45" y="4.40" width="5" height="4.45" fill="rgb(186,187,193)"/><rect x="50" y="4.40" width="5" height="4.45" fill="rgb(186,189,194)"/><rect x="55" y="4.40" width="5" height="4.45" fill="rgb(189,187,195)"/><rect x="60" y="4.40" width="5" height="4.45" fill="rgb(244,246,247)"/><rect x="65" y="4.40" width="5" height="4.45" fill="rgb(244,245,252)"/><rect x="0" y="8.80" width="5" height="4.45" fill="rgb(251,249,255)"/><rect x="5" y="8.80" width="5" height="4.45" fill="rgb(235,236,235)"/><rect x="10" y="8.80" width="5" height="4.45" fill="rgb(237,234,244)"/><rect x="15" y="8.80" width="5" height="4.45" fill="rgb(223,222,224)"/><rect x="20" y="8.80" width="5" height="4.45" fill="rgb(252,255,255)"/><rect x="25" y="8.80" width="5" height="4.45" fill="rgb(236,238,240)"/><rect x="30" y="8.80" width="5" height="4.45" fill="rgb(238,240,240)"/><rect x="35" y="8.80" width="5" height="4.45" fill="rgb(225,224,232)"/><rect x="40" y="8.80" width="5" height="4.45" fill="rgb(224,226,226)"/><rect x="45" y="8.80" width="5" height="4.45" fill="rgb(226,227,232)"/><rect x="50" y="8.80" width="5" height="4.45" fill="rgb(220,218,227)"/><rect x="55" y="8.80" width="5" height="4.45" fill="rgb(246,244,246)"/><rect x="60" y="8.80" width="5" height="4.45" fill="rgb(244,242,250)"/><rect x="65" y="8.80" width="5" height="4.45" fill="rgb(244,242,245)"/><rect x="0" y="13.20" width="5" height="4.45" fill="rgb(232,235,234)"/><rect x="5" y="13.20" width="5" height="4.45" fill="rgb(142,142,146)"/><rect x="10" y="13.20" width="5" height="4.45" fill="rgb(162,161,169)"/><rect x="15" y="13.20" width="5" height="4.45" fill="rgb(168,170,171)"/><rect x="20" y="13.20" width="5" height="4.45" fill="rgb(169,167,173)"/><rect x="25" y="13.20" width="5" height="4.45" fill="rgb(189,191,192)"/><rect x="30" y="13.20" width="5" height="4.45" fill="rgb(143,143,146)"/><rect x="35" y="13.20" width="5" height="4.45" fill="rgb(193,196,200)"/><rect x="40" y="13.20" width="5" height="4.45" fill="rgb(178,181,181)"/><rect x="45" y="13.20" width="5" height="4.45" fill="rgb(183,185,186)"/><rect x="50" y="13.20" width="5" height="4.45" fill="rgb(158,155,160)"/><rect x="55" y="13.20" width="5" height="4.45" fill="rgb(192,194,198)"/><rect x="60" y="13.20" width="5" height="4.45" fill="rgb(184,187,191)"/><rect x="65" y="13.20" width="5" height="4.45" fill="rgb(150,147,154)"/><rect x="0" y="17.60" width="5" height="4.45" fill="rgb(232,232,235)"/><rect x="5" y="17.60" width="5" height="4.45" fill="rgb(217,219,223)"/><rect x="10" y="17.60" width="5" height="4.45" fill="rgb(250,248,252)"/><rect x="15" y="17.60" width="5" height="4.45" fill="rgb(210,212,211)"/><rect x="20" y="17.60" width="5" height="4.45" fill="rgb(236,233,238)"/><rect x="25" y="17.60" width="5" height="4.45" fill="rgb(223,225,225)"/><rect x="30" y="17.60" width="5" height="4.45" fill="rgb(252,250,252)"/><rect x="35" y="17.60" width="5" height="4.45" fill="rgb(250,248,252)"/><rect x="40" y="17.60" width="5" height="4.45" fill="rgb(214,214,220)"/><rect x="45" y="17.60" width="5" height="4.45" fill="rgb(236,238,237)"/><rect x="50" y="17.60" width="5" height="4.45" fill="rgb(252,251,255)"/><rect x="55" y="17.60" width="5" height="4.45" fill="rgb(214,214,221)"/><rect x="60" y="17.60" width="5" height="4.45" fill="rgb(249,247,251)"/><rect x="65" y="17.60" width="5" height="4.45" fill="rgb(251,248,255)"/></svg>
<div class="t" style="left:564.80px;top:536px;font-size:9.3px;line-height:9.3px;color:#000;font-weight:400;letter-spacing:-0.210px;">SetOrUnsetResourcesDispatchable</div>
<div class="t" style="left:789.30px;top:535px;font-size:9.5px;line-height:9.5px;color:#000;font-weight:400;letter-spacing:0.079px;">11/3/2020 4:47:29 PM</div>
<div class="r" style="left:8px;top:553px;width:878px;height:1.3px;background:#000"></div>
<svg class="r" style="left:13px;top:556px" width="9" height="9" viewBox="0 0 9 9"><rect x="0.5" y="0.5" width="8" height="8" fill="#fff" stroke="#000" stroke-width="1"/><path d="M2 4.5 H7 M4.5 2 V7" stroke="#000" stroke-width="1"/></svg>
<div class="t" style="left:23.50px;top:558px;font-size:9.3px;line-height:9.3px;color:#000;font-weight:400;letter-spacing:-0.121px;">BeginMaintenanceActivityOrders</div>
<svg class="r" style="left:238px;top:557px" width="67" height="22"><rect x="0" y="0.00" width="5" height="4.45" fill="rgb(232,232,235)"/><rect x="5" y="0.00" width="5" height="4.45" fill="rgb(223,220,224)"/><rect x="10" y="0.00" width="5" height="4.45" fill="rgb(220,220,227)"/><rect x="15" y="0.00" width="5" height="4.45" fill="rgb(200,203,201)"/><rect x="20" y="0.00" width="5" height="4.45" fill="rgb(210,207,212)"/><rect x="25" y="0.00" width="5" height="4.45" fill="rgb(193,194,193)"/><rect x="30" y="0.00" width="5" height="4.45" fill="rgb(181,179,182)"/><rect x="35" y="0.00" width="5" height="4.45" fill="rgb(223,221,231)"/><rect x="40" y="0.00" width="5" height="4.45" fill="rgb(197,195,203)"/><rect x="45" y="0.00" width="5" height="4.45" fill="rgb(225,226,231)"/><rect x="50" y="0.00" width="5" height="4.45" fill="rgb(193,196,196)"/><rect x="55" y="0.00" width="5" height="4.45" fill="rgb(184,183,187)"/><rect x="60" y="0.00" width="5" height="4.45" fill="rgb(244,242,252)"/><rect x="65" y="0.00" width="5" height="4.45" fill="rgb(244,247,248)"/><rect x="0" y="4.40" width="5" height="4.45" fill="rgb(232,231,235)"/><rect x="5" y="4.40" width="5" height="4.45" fill="rgb(194,195,201)"/><rect x="10" y="4.40" width="5" height="4.45" fill="rgb(179,177,187)"/><rect x="15" y="4.40" width="5" height="4.45" fill="rgb(164,161,171)"/><rect x="20" y="4.40" width="5" height="4.45" fill="rgb(155,153,161)"/><rect x="25" y="4.40" width="5" height="4.45" fill="rgb(178,177,179)"/><rect x="30" y="4.40" width="5" height="4.45" fill="rgb(176,175,177)"/><rect x="35" y="4.40" width="5" height="4.45" fill="rgb(198,200,199)"/><rect x="40" y="4.40" width="5" height="4.45" fill="rgb(165,165,166)"/><rect x="45" y="4.40" width="5" height="4.45" fill="rgb(182,185,183)"/><rect x="50" y="4.40" width="5" height="4.45" fill="rgb(191,191,195)"/><rect x="55" y="4.40" width="5" height="4.45" fill="rgb(147,148,154)"/><rect x="60" y="4.40" width="5" height="4.45" fill="rgb(244,245,250)"/><rect x="65" y="4.40" width="5" height="4.45" fill="rgb(244,247,251)"/><rect x="0" y="8.80" width="5" height="4.45" fill="rgb(232,234,233)"/><rect x="5" y="8.80" width="5" height="4.45" fill="rgb(223,223,223)"/><rect x="10" y="8.80" width="5" height="4.45" fill="rgb(232,234,236)"/><rect x="15" y="8.80" width="5" height="4.45" fill="rgb(212,213,215)"/><rect x="20" y="8.80" width="5" height="4.45" fill="rgb(248,246,251)"/><rect x="25" y="8.80" width="5" height="4.45" fill="rgb(226,226,228)"/><rect x="30" y="8.80" width="5" height="4.45" fill="rgb(249,246,255)"/><rect x="35" y="8.80" width="5" height="4.45" fill="rgb(213,213,220)"/><rect x="40" y="8.80" width="5" height="4.45" fill="rgb(233,230,241)"/><rect x="45" y="8.80" width="5" height="4.45" fill="rgb(221,223,221)"/><rect x="50" y="8.80" width="5" height="4.45" fill="rgb(232,231,235)"/><rect x="55" y="8.80" width="5" height="4.45" fill="rgb(246,243,253)"/><rect x="60" y="8.80" width="5" height="4.45" fill="rgb(244,244,246)"/><rect x="65" y="8.80" width="5" height="4.45" fill="rgb(244,243,249)"/><rect x="0" y="13.20" width="5" height="4.45" fill="rgb(232,235,232)"/><rect x="5" y="13.20" width="5" height="4.45" fill="rgb(186,187,193)"/><rect x="10" y="13.20" width="5" height="4.45" fill="rgb(164,162,169)"/><rect x="15" y="13.20" width="5" height="4.45" fill="rgb(183,185,184)"/><rect x="20" y="13.20" width="5" height="4.45" fill="rgb(143,144,149)"/><rect x="25" y="13.20" width="5" height="4.45" fill="rgb(182,184,184)"/><rect x="30" y="13.20" width="5" height="4.45" fill="rgb(168,168,172)"/><rect x="35" y="13.20" width="5" height="4.45" fill="rgb(191,194,195)"/><rect x="40" y="13.20" width="5" height="4.45" fill="rgb(180,182,188)"/><rect x="45" y="13.20" width="5" height="4.45" fill="rgb(162,162,166)"/><rect x="50" y="13.20" width="5" height="4.45" fill="rgb(159,160,159)"/><rect x="55" y="13.20" width="5" height="4.45" fill="rgb(167,170,174)"/><rect x="60" y="13.20" width="5" height="4.45" fill="rgb(163,166,169)"/><rect x="65" y="13.20" width="5" height="4.45" fill="rgb(151,149,158)"/><rect x="0" y="17.60" width="5" height="4.45" fill="rgb(252,252,255)"/><rect x="5" y="17.60" width="5" height="4.45" fill="rgb(248,251,248)"/><rect x="10" y="17.60" width="5" height="4.45" fill="rgb(213,213,213)"/><rect x="15" y="17.60" width="5" height="4.45" fill="rgb(227,225,230)"/><rect x="20" y="17.60" width="5" height="4.45" fill="rgb(244,244,250)"/><rect x="25" y="17.60" width="5" height="4.45" fill="rgb(213,212,213)"/><rect x="30" y="17.60" width="5" height="4.45" fill="rgb(247,248,255)"/><rect x="35" y="17.60" width="5" height="4.45" fill="rgb(240,237,240)"/><rect x="40" y="17.60" width="5" height="4.45" fill="rgb(214,212,222)"/><rect x="45" y="17.60" width="5" height="4.45" fill="rgb(228,231,228)"/><rect x="50" y="17.60" width="5" height="4.45" fill="rgb(252,255,255)"/><rect x="55" y="17.60" width="5" height="4.45" fill="rgb(222,224,225)"/><rect x="60" y="17.60" width="5" height="4.45" fill="rgb(222,222,223)"/><rect x="65" y="17.60" width="5" height="4.45" fill="rgb(252,251,255)"/></svg>
<div class="t" style="left:564.80px;top:563px;font-size:9.3px;line-height:9.3px;color:#000;font-weight:400;letter-spacing:-0.210px;">SetOrUnsetResourcesDispatchable</div>
<div class="t" style="left:789.30px;top:562px;font-size:9.5px;line-height:9.5px;color:#000;font-weight:400;letter-spacing:0.079px;">11/3/2020 4:46:13 PM</div>
<div class="r" style="left:8px;top:580px;width:878px;height:1.3px;background:#000"></div>
<svg class="r" style="left:13px;top:583px" width="9" height="9" viewBox="0 0 9 9"><rect x="0.5" y="0.5" width="8" height="8" fill="#fff" stroke="#000" stroke-width="1"/><path d="M2 4.5 H7 M4.5 2 V7" stroke="#000" stroke-width="1"/></svg>
<div class="t" style="left:23.50px;top:585px;font-size:9.3px;line-height:9.3px;color:#000;font-weight:400;letter-spacing:-0.094px;">CompleteMaintenanceActivityOrders</div>
<svg class="r" style="left:237px;top:584px" width="70" height="22"><rect x="0" y="0.00" width="5" height="4.45" fill="rgb(232,235,235)"/><rect x="5" y="0.00" width="5" height="4.45" fill="rgb(225,228,228)"/><rect x="10" y="0.00" width="5" height="4.45" fill="rgb(204,203,204)"/><rect x="15" y="0.00" width="5" height="4.45" fill="rgb(224,222,224)"/><rect x="20" y="0.00" width="5" height="4.45" fill="rgb(189,186,191)"/><rect x="25" y="0.00" width="5" height="4.45" fill="rgb(186,183,191)"/><rect x="30" y="0.00" width="5" height="4.45" fill="rgb(202,204,202)"/><rect x="35" y="0.00" width="5" height="4.45" fill="rgb(191,192,195)"/><rect x="40" y="0.00" width="5" height="4.45" fill="rgb(204,203,206)"/><rect x="45" y="0.00" width="5" height="4.45" fill="rgb(219,218,225)"/><rect x="50" y="0.00" width="5" height="4.45" fill="rgb(181,181,188)"/><rect x="55" y="0.00" width="5" height="4.45" fill="rgb(213,211,217)"/><rect x="60" y="0.00" width="5" height="4.45" fill="rgb(244,247,244)"/><rect x="65" y="0.00" width="5" height="4.45" fill="rgb(244,241,245)"/><rect x="0" y="4.40" width="5" height="4.45" fill="rgb(232,230,236)"/><rect x="5" y="4.40" width="5" height="4.45" fill="rgb(181,181,186)"/><rect x="10" y="4.40" width="5" height="4.45" fill="rgb(150,149,158)"/><rect x="15" y="4.40" width="5" height="4.45" fill="rgb(158,161,159)"/><rect x="20" y="4.40" width="5" height="4.45" fill="rgb(148,150,155)"/><rect x="25" y="4.40" width="5" height="4.45" fill="rgb(197,200,205)"/><rect x="30" y="4.40" width="5" height="4.45" fill="rgb(176,178,178)"/><rect x="35" y="4.40" width="5" height="4.45" fill="rgb(160,158,162)"/><rect x="40" y="4.40" width="5" height="4.45" fill="rgb(179,177,179)"/><rect x="45" y="4.40" width="5" height="4.45" fill="rgb(180,180,180)"/><rect x="50" y="4.40" width="5" height="4.45" fill="rgb(155,155,157)"/><rect x="55" y="4.40" width="5" height="4.45" fill="rgb(159,160,166)"/><rect x="60" y="4.40" width="5" height="4.45" fill="rgb(244,241,246)"/><rect x="65" y="4.40" width="5" height="4.45" fill="rgb(244,241,246)"/><rect x="0" y="8.80" width="5" height="4.45" fill="rgb(252,254,255)"/><rect x="5" y="8.80" width="5" height="4.45" fill="rgb(219,216,226)"/><rect x="10" y="8.80" width="5" height="4.45" fill="rgb(251,252,255)"/><rect x="15" y="8.80" width="5" height="4.45" fill="rgb(252,255,255)"/><rect x="20" y="8.80" width="5" height="4.45" fill="rgb(242,243,245)"/><rect x="25" y="8.80" width="5" height="4.45" fill="rgb(252,252,255)"/><rect x="30" y="8.80" width="5" height="4.45" fill="rgb(213,216,213)"/><rect x="35" y="8.80" width="5" height="4.45" fill="rgb(252,255,255)"/><rect x="40" y="8.80" width="5" height="4.45" fill="rgb(245,247,253)"/><rect x="45" y="8.80" width="5" height="4.45" fill="rgb(252,254,252)"/><rect x="50" y="8.80" width="5" height="4.45" fill="rgb(249,252,249)"/><rect x="55" y="8.80" width="5" height="4.45" fill="rgb(228,225,231)"/><rect x="60" y="8.80" width="5" height="4.45" fill="rgb(252,252,255)"/><rect x="65" y="8.80" width="5" height="4.45" fill="rgb(244,241,247)"/><rect x="0" y="13.20" width="5" height="4.45" fill="rgb(232,230,233)"/><rect x="5" y="13.20" width="5" height="4.45" fill="rgb(194,195,198)"/><rect x="10" y="13.20" width="5" height="4.45" fill="rgb(148,149,150)"/><rect x="15" y="13.20" width="5" height="4.45" fill="rgb(182,179,182)"/><rect x="20" y="13.20" width="5" height="4.45" fill="rgb(168,170,171)"/><rect x="25" y="13.20" width="5" height="4.45" fill="rgb(152,152,157)"/><rect x="30" y="13.20" width="5" height="4.45" fill="rgb(176,174,179)"/><rect x="35" y="13.20" width="5" height="4.45" fill="rgb(147,145,150)"/><rect x="40" y="13.20" width="5" height="4.45" fill="rgb(156,159,159)"/><rect x="45" y="13.20" width="5" height="4.45" fill="rgb(179,182,180)"/><rect x="50" y="13.20" width="5" height="4.45" fill="rgb(188,186,188)"/><rect x="55" y="13.20" width="5" height="4.45" fill="rgb(166,167,169)"/><rect x="60" y="13.20" width="5" height="4.45" fill="rgb(174,175,177)"/><rect x="65" y="13.20" width="5" height="4.45" fill="rgb(172,170,179)"/><rect x="0" y="17.60" width="5" height="4.45" fill="rgb(232,229,236)"/><rect x="5" y="17.60" width="5" height="4.45" fill="rgb(242,239,248)"/><rect x="10" y="17.60" width="5" height="4.45" fill="rgb(220,221,221)"/><rect x="15" y="17.60" width="5" height="4.45" fill="rgb(208,208,208)"/><rect x="20" y="17.60" width="5" height="4.45" fill="rgb(231,234,234)"/><rect x="25" y="17.60" width="5" height="4.45" fill="rgb(230,231,237)"/><rect x="30" y="17.60" width="5" height="4.45" fill="rgb(223,220,231)"/><rect x="35" y="17.60" width="5" height="4.45" fill="rgb(214,215,219)"/><rect x="40" y="17.60" width="5" height="4.45" fill="rgb(208,211,210)"/><rect x="45" y="17.60" width="5" height="4.45" fill="rgb(235,232,237)"/><rect x="50" y="17.60" width="5" height="4.45" fill="rgb(241,240,247)"/><rect x="55" y="17.60" width="5" height="4.45" fill="rgb(207,206,212)"/><rect x="60" y="17.60" width="5" height="4.45" fill="rgb(239,239,239)"/><rect x="65" y="17.60" width="5" height="4.45" fill="rgb(250,248,252)"/></svg>
<div class="t" style="left:564.80px;top:590px;font-size:9.3px;line-height:9.3px;color:#000;font-weight:400;letter-spacing:-0.210px;">SetOrUnsetResourcesDispatchable</div>
<div class="t" style="left:789.30px;top:589px;font-size:9.5px;line-height:9.5px;color:#000;font-weight:400;letter-spacing:0.079px;">11/3/2020 4:32:31 PM</div>
<div class="r" style="left:8px;top:607px;width:878px;height:1.3px;background:#000"></div>
<svg class="r" style="left:13px;top:610px" width="9" height="9" viewBox="0 0 9 9"><rect x="0.5" y="0.5" width="8" height="8" fill="#fff" stroke="#000" stroke-width="1"/><path d="M2 4.5 H7 M4.5 2 V7" stroke="#000" stroke-width="1"/></svg>
<div class="t" style="left:23.50px;top:612px;font-size:9.3px;line-height:9.3px;color:#000;font-weight:400;letter-spacing:-0.121px;">BeginMaintenanceActivityOrders</div>
<svg class="r" style="left:238px;top:611px" width="67" height="22"><rect x="0" y="0.00" width="5" height="4.45" fill="rgb(232,231,233)"/><rect x="5" y="0.00" width="5" height="4.45" fill="rgb(179,178,187)"/><rect x="10" y="0.00" width="5" height="4.45" fill="rgb(228,229,233)"/><rect x="15" y="0.00" width="5" height="4.45" fill="rgb(197,195,202)"/><rect x="20" y="0.00" width="5" height="4.45" fill="rgb(189,192,191)"/><rect x="25" y="0.00" width="5" height="4.45" fill="rgb(185,187,191)"/><rect x="30" y="0.00" width="5" height="4.45" fill="rgb(201,199,207)"/><rect x="35" y="0.00" width="5" height="4.45" fill="rgb(218,218,225)"/><rect x="40" y="0.00" width="5" height="4.45" fill="rgb(210,213,213)"/><rect x="45" y="0.00" width="5" height="4.45" fill="rgb(224,222,228)"/><rect x="50" y="0.00" width="5" height="4.45" fill="rgb(231,232,235)"/><rect x="55" y="0.00" width="5" height="4.45" fill="rgb(182,181,183)"/><rect x="60" y="0.00" width="5" height="4.45" fill="rgb(244,247,246)"/><rect x="65" y="0.00" width="5" height="4.45" fill="rgb(244,246,250)"/><rect x="0" y="4.40" width="5" height="4.45" fill="rgb(232,233,239)"/><rect x="5" y="4.40" width="5" height="4.45" fill="rgb(198,199,206)"/><rect x="10" y="4.40" width="5" height="4.45" fill="rgb(170,171,174)"/><rect x="15" y="4.40" width="5" height="4.45" fill="rgb(196,199,204)"/><rect x="20" y="4.40" width="5" height="4.45" fill="rgb(190,187,196)"/><rect x="25" y="4.40" width="5" height="4.45" fill="rgb(168,167,172)"/><rect x="30" y="4.40" width="5" height="4.45" fill="rgb(182,180,183)"/><rect x="35" y="4.40" width="5" height="4.45" fill="rgb(181,181,187)"/><rect x="40" y="4.40" width="5" height="4.45" fill="rgb(168,171,168)"/><rect x="45" y="4.40" width="5" height="4.45" fill="rgb(181,179,184)"/><rect x="50" y="4.40" width="5" height="4.45" fill="rgb(149,150,151)"/><rect x="55" y="4.40" width="5" height="4.45" fill="rgb(166,169,172)"/><rect x="60" y="4.40" width="5" height="4.45" fill="rgb(244,247,252)"/><rect x="65" y="4.40" width="5" height="4.45" fill="rgb(244,246,244)"/><rect x="0" y="8.80" width="5" height="4.45" fill="rgb(232,234,233)"/><rect x="5" y="8.80" width="5" height="4.45" fill="rgb(234,235,238)"/><rect x="10" y="8.80" width="5" height="4.45" fill="rgb(229,231,232)"/><rect x="15" y="8.80" width="5" height="4.45" fill="rgb(252,251,255)"/><rect x="20" y="8.80" width="5" height="4.45" fill="rgb(231,228,232)"/><rect x="25" y="8.80" width="5" height="4.45" fill="rgb(218,218,220)"/><rect x="30" y="8.80" width="5" height="4.45" fill="rgb(239,242,244)"/><rect x="35" y="8.80" width="5" height="4.45" fill="rgb(217,215,217)"/><rect x="40" y="8.80" width="5" height="4.45" fill="rgb(230,228,233)"/><rect x="45" y="8.80" width="5" height="4.45" fill="rgb(252,249,255)"/><rect x="50" y="8.80" width="5" height="4.45" fill="rgb(223,225,231)"/><rect x="55" y="8.80" width="5" height="4.45" fill="rgb(225,226,229)"/><rect x="60" y="8.80" width="5" height="4.45" fill="rgb(244,247,245)"/><rect x="65" y="8.80" width="5" height="4.45" fill="rgb(244,247,252)"/><rect x="0" y="13.20" width="5" height="4.45" fill="rgb(232,232,232)"/><rect x="5" y="13.20" width="5" height="4.45" fill="rgb(180,178,182)"/><rect x="10" y="13.20" width="5" height="4.45" fill="rgb(190,188,190)"/><rect x="15" y="13.20" width="5" height="4.45" fill="rgb(183,185,190)"/><rect x="20" y="13.20" width="5" height="4.45" fill="rgb(162,165,165)"/><rect x="25" y="13.20" width="5" height="4.45" fill="rgb(184,187,189)"/><rect x="30" y="13.20" width="5" height="4.45" fill="rgb(164,163,164)"/><rect x="35" y="13.20" width="5" height="4.45" fill="rgb(154,153,160)"/><rect x="40" y="13.20" width="5" height="4.45" fill="rgb(163,165,164)"/><rect x="45" y="13.20" width="5" height="4.45" fill="rgb(156,154,160)"/><rect x="50" y="13.20" width="5" height="4.45" fill="rgb(147,150,151)"/><rect x="55" y="13.20" width="5" height="4.45" fill="rgb(146,149,149)"/><rect x="60" y="13.20" width="5" height="4.45" fill="rgb(144,146,144)"/><rect x="65" y="13.20" width="5" height="4.45" fill="rgb(177,174,182)"/><rect x="0" y="17.60" width="5" height="4.45" fill="rgb(252,249,255)"/><rect x="5" y="17.60" width="5" height="4.45" fill="rgb(252,255,255)"/><rect x="10" y="17.60" width="5" height="4.45" fill="rgb(234,234,241)"/><rect x="15" y="17.60" width="5" height="4.45" fill="rgb(217,217,217)"/><rect x="20" y="17.60" width="5" height="4.45" fill="rgb(207,209,209)"/><rect x="25" y="17.60" width="5" height="4.45" fill="rgb(225,225,227)"/><rect x="30" y="17.60" width="5" height="4.45" fill="rgb(217,218,220)"/><rect x="35" y="17.60" width="5" height="4.45" fill="rgb(210,212,210)"/><rect x="40" y="17.60" width="5" height="4.45" fill="rgb(229,227,235)"/><rect x="45" y="17.60" width="5" height="4.45" fill="rgb(244,246,244)"/><rect x="50" y="17.60" width="5" height="4.45" fill="rgb(252,252,253)"/><rect x="55" y="17.60" width="5" height="4.45" fill="rgb(240,240,247)"/><rect x="60" y="17.60" width="5" height="4.45" fill="rgb(238,235,244)"/><rect x="65" y="17.60" width="5" height="4.45" fill="rgb(209,211,214)"/></svg>
<div class="t" style="left:564.80px;top:617px;font-size:9.3px;line-height:9.3px;color:#000;font-weight:400;letter-spacing:-0.210px;">SetOrUnsetResourcesDispatchable</div>
<div class="t" style="left:789.30px;top:616px;font-size:9.5px;line-height:9.5px;color:#000;font-weight:400;letter-spacing:0.079px;">11/3/2020 4:22:48 PM</div>
<div class="r" style="left:8px;top:634px;width:878px;height:1.3px;background:#000"></div>
<svg class="r" style="left:13px;top:637px" width="9" height="9" viewBox="0 0 9 9"><rect x="0.5" y="0.5" width="8" height="8" fill="#fff" stroke="#000" stroke-width="1"/><path d="M2 4.5 H7 M4.5 2 V7" stroke="#000" stroke-width="1"/></svg>
<div class="t" style="left:23.50px;top:639px;font-size:9.3px;line-height:9.3px;color:#000;font-weight:400;letter-spacing:-0.121px;">BeginMaintenanceActivityOrders</div>
<svg class="r" style="left:237px;top:638px" width="70" height="22"><rect x="0" y="0.00" width="5" height="4.45" fill="rgb(232,232,232)"/><rect x="5" y="0.00" width="5" height="4.45" fill="rgb(214,215,221)"/><rect x="10" y="0.00" width="5" height="4.45" fill="rgb(182,185,186)"/><rect x="15" y="0.00" width="5" height="4.45" fill="rgb(230,227,233)"/><rect x="20" y="0.00" width="5" height="4.45" fill="rgb(230,230,235)"/><rect x="25" y="0.00" width="5" height="4.45" fill="rgb(206,206,210)"/><rect x="30" y="0.00" width="5" height="4.45" fill="rgb(223,221,230)"/><rect x="35" y="0.00" width="5" height="4.45" fill="rgb(196,198,203)"/><rect x="40" y="0.00" width="5" height="4.45" fill="rgb(220,218,222)"/><rect x="45" y="0.00" width="5" height="4.45" fill="rgb(196,195,203)"/><rect x="50" y="0.00" width="5" height="4.45" fill="rgb(201,198,205)"/><rect x="55" y="0.00" width="5" height="4.45" fill="rgb(201,200,203)"/><rect x="60" y="0.00" width="5" height="4.45" fill="rgb(244,244,245)"/><rect x="65" y="0.00" width="5" height="4.45" fill="rgb(244,241,249)"/><rect x="0" y="4.40" width="5" height="4.45" fill="rgb(232,234,234)"/><rect x="5" y="4.40" width="5" height="4.45" fill="rgb(196,198,201)"/><rect x="10" y="4.40" width="5" height="4.45" fill="rgb(174,176,182)"/><rect x="15" y="4.40" width="5" height="4.45" fill="rgb(165,166,169)"/><rect x="20" y="4.40" width="5" height="4.45" fill="rgb(177,177,183)"/><rect x="25" y="4.40" width="5" height="4.45" fill="rgb(161,159,163)"/><rect x="30" y="4.40" width="5" height="4.45" fill="rgb(177,175,179)"/><rect x="35" y="4.40" width="5" height="4.45" fill="rgb(161,159,166)"/><rect x="40" y="4.40" width="5" height="4.45" fill="rgb(182,183,185)"/><rect x="45" y="4.40" width="5" height="4.45" fill="rgb(154,153,158)"/><rect x="50" y="4.40" width="5" height="4.45" fill="rgb(154,155,159)"/><rect x="55" y="4.40" width="5" height="4.45" fill="rgb(181,181,189)"/><rect x="60" y="4.40" width="5" height="4.45" fill="rgb(244,242,250)"/><rect x="65" y="4.40" width="5" height="4.45" fill="rgb(244,246,252)"/><rect x="0" y="8.80" width="5" height="4.45" fill="rgb(235,235,241)"/><rect x="5" y="8.80" width="5" height="4.45" fill="rgb(252,254,254)"/><rect x="10" y="8.80" width="5" height="4.45" fill="rgb(222,223,222)"/><rect x="15" y="8.80" width="5" height="4.45" fill="rgb(252,251,255)"/><rect x="20" y="8.80" width="5" height="4.45" fill="rgb(245,242,246)"/><rect x="25" y="8.80" width="5" height="4.45" fill="rgb(252,253,255)"/><rect x="30" y="8.80" width="5" height="4.45" fill="rgb(243,244,246)"/><rect x="35" y="8.80" width="5" height="4.45" fill="rgb(247,250,247)"/><rect x="40" y="8.80" width="5" height="4.45" fill="rgb(225,228,226)"/><rect x="45" y="8.80" width="5" height="4.45" fill="rgb(252,252,253)"/><rect x="50" y="8.80" width="5" height="4.45" fill="rgb(235,233,239)"/><rect x="55" y="8.80" width="5" height="4.45" fill="rgb(225,228,227)"/><rect x="60" y="8.80" width="5" height="4.45" fill="rgb(252,249,253)"/><rect x="65" y="8.80" width="5" height="4.45" fill="rgb(246,248,250)"/><rect x="0" y="13.20" width="5" height="4.45" fill="rgb(232,235,236)"/><rect x="5" y="13.20" width="5" height="4.45" fill="rgb(148,147,155)"/><rect x="10" y="13.20" width="5" height="4.45" fill="rgb(142,142,150)"/><rect x="15" y="13.20" width="5" height="4.45" fill="rgb(176,174,177)"/><rect x="20" y="13.20" width="5" height="4.45" fill="rgb(161,160,161)"/><rect x="25" y="13.20" width="5" height="4.45" fill="rgb(160,157,167)"/><rect x="30" y="13.20" width="5" height="4.45" fill="rgb(155,154,157)"/><rect x="35" y="13.20" width="5" height="4.45" fill="rgb(144,145,149)"/><rect x="40" y="13.20" width="5" height="4.45" fill="rgb(142,143,144)"/><rect x="45" y="13.20" width="5" height="4.45" fill="rgb(184,186,192)"/><rect x="50" y="13.20" width="5" height="4.45" fill="rgb(163,165,168)"/><rect x="55" y="13.20" width="5" height="4.45" fill="rgb(149,152,149)"/><rect x="60" y="13.20" width="5" height="4.45" fill="rgb(194,193,202)"/><rect x="65" y="13.20" width="5" height="4.45" fill="rgb(190,187,191)"/><rect x="0" y="17.60" width="5" height="4.45" fill="rgb(232,235,240)"/><rect x="5" y="17.60" width="5" height="4.45" fill="rgb(229,230,237)"/><rect x="10" y="17.60" width="5" height="4.45" fill="rgb(232,235,232)"/><rect x="15" y="17.60" width="5" height="4.45" fill="rgb(228,227,231)"/><rect x="20" y="17.60" width="5" height="4.45" fill="rgb(252,254,255)"/><rect x="25" y="17.60" width="5" height="4.45" fill="rgb(221,222,226)"/><rect x="30" y="17.60" width="5" height="4.45" fill="rgb(240,239,246)"/><rect x="35" y="17.60" width="5" height="4.45" fill="rgb(245,242,251)"/><rect x="40" y="17.60" width="5" height="4.45" fill="rgb(227,227,227)"/><rect x="45" y="17.60" width="5" height="4.45" fill="rgb(238,237,240)"/><rect x="50" y="17.60" width="5" height="4.45" fill="rgb(239,239,245)"/><rect x="55" y="17.60" width="5" height="4.45" fill="rgb(222,225,223)"/><rect x="60" y="17.60" width="5" height="4.45" fill="rgb(252,255,255)"/><rect x="65" y="17.60" width="5" height="4.45" fill="rgb(252,255,255)"/></svg>
<div class="t" style="left:564.80px;top:644px;font-size:9.3px;line-height:9.3px;color:#000;font-weight:400;letter-spacing:-0.210px;">SetOrUnsetResourcesDispatchable</div>
<div class="t" style="left:789.30px;top:643px;font-size:9.5px;line-height:9.5px;color:#000;font-weight:400;letter-spacing:0.079px;">11/3/2020 4:21:18 PM</div>
<div class="r" style="left:8px;top:661px;width:878px;height:1.3px;background:#000"></div>
<div class="r" style="left:5px;top:695px;width:881px;height:18px;background:#4a67a1"></div>
<div class="t" style="left:65.50px;top:699px;font-size:9.5px;line-height:9.5px;color:#fff;font-weight:700;letter-spacing:0.075px;">SCHEDULED DOWN [Reason 1]</div>
<div class="t" style="left:369.80px;top:699px;font-size:9.5px;line-height:9.5px;color:#fff;font-weight:700;letter-spacing:0.646px;">from 11/3/2020 4:21:18 PM to 11/3/2020 4:21:18 PM</div>
<div class="r" style="left:5px;top:713px;width:881px;height:58px;background:#fff;border:1px solid #e4e4e4;box-sizing:border-box"></div>
<div class="r" style="left:6px;top:714px;width:94px;height:56px;background:#c5d9fb"></div>
<div class="r" style="left:368px;top:714px;width:94px;height:37px;background:#c5d9fb"></div>
<div class="r" style="left:5px;top:732px;width:881px;height:1px;background:#e4e4e4"></div>
<div class="r" style="left:5px;top:751px;width:881px;height:1px;background:#e4e4e4"></div>
<div class="r" style="left:100px;top:713px;width:1px;height:58px;background:#e4e4e4"></div>
<div class="r" style="left:462px;top:713px;width:1px;height:38px;background:#e4e4e4"></div>
<div class="r" style="left:367px;top:713px;width:1px;height:38px;background:#e4e4e4"></div>
<div class="t" style="left:8.75px;top:718px;font-size:9.5px;line-height:9.5px;color:#4b5a86;font-weight:700;letter-spacing:0.161px;">Transition</div>
<div class="t" style="left:8.75px;top:736px;font-size:9.5px;line-height:9.5px;color:#4b5a86;font-weight:700;letter-spacing:0.141px;">System State</div>
<div class="t" style="left:8.75px;top:756px;font-size:9.5px;line-height:9.5px;color:#4b5a86;font-weight:700;letter-spacing:0.175px;">Comment</div>
<div class="t" style="left:371.00px;top:718px;font-size:9.5px;line-height:9.5px;color:#4b5a86;font-weight:700;letter-spacing:0.242px;">Time at State</div>
<div class="t" style="left:371.00px;top:736px;font-size:9.5px;line-height:9.5px;color:#4b5a86;font-weight:700;letter-spacing:-0.067px;">User</div>
<div class="t" style="left:104.10px;top:719px;font-size:9.3px;line-height:9.3px;color:#000;font-weight:400;letter-spacing:-0.091px;">Standby to ScheduledDown</div>
<div class="t" style="left:104.10px;top:738px;font-size:9.3px;line-height:9.3px;color:#000;font-weight:400;letter-spacing:-1.500px;">Up</div>
<div class="t" style="left:465.80px;top:719px;font-size:9.3px;line-height:9.3px;color:#000;font-weight:400;letter-spacing:0.125px;">0h00m</div>
<svg class="r" style="left:465px;top:737px" width="58" height="10"><rect x="0" y="0.00" width="5" height="5.05" fill="rgb(232,232,238)"/><rect x="5" y="0.00" width="5" height="5.05" fill="rgb(209,208,216)"/><rect x="10" y="0.00" width="5" height="5.05" fill="rgb(182,185,189)"/><rect x="15" y="0.00" width="5" height="5.05" fill="rgb(220,221,222)"/><rect x="20" y="0.00" width="5" height="5.05" fill="rgb(201,202,204)"/><rect x="25" y="0.00" width="5" height="5.05" fill="rgb(219,216,219)"/><rect x="30" y="0.00" width="5" height="5.05" fill="rgb(192,193,198)"/><rect x="35" y="0.00" width="5" height="5.05" fill="rgb(173,171,176)"/><rect x="40" y="0.00" width="5" height="5.05" fill="rgb(183,185,183)"/><rect x="45" y="0.00" width="5" height="5.05" fill="rgb(196,198,202)"/><rect x="50" y="0.00" width="5" height="5.05" fill="rgb(208,208,208)"/><rect x="55" y="0.00" width="5" height="5.05" fill="rgb(190,191,197)"/><rect x="0" y="5.00" width="5" height="5.05" fill="rgb(232,229,237)"/><rect x="5" y="5.00" width="5" height="5.05" fill="rgb(187,185,188)"/><rect x="10" y="5.00" width="5" height="5.05" fill="rgb(193,196,193)"/><rect x="15" y="5.00" width="5" height="5.05" fill="rgb(215,213,223)"/><rect x="20" y="5.00" width="5" height="5.05" fill="rgb(232,231,238)"/><rect x="25" y="5.00" width="5" height="5.05" fill="rgb(217,215,219)"/><rect x="30" y="5.00" width="5" height="5.05" fill="rgb(228,225,235)"/><rect x="35" y="5.00" width="5" height="5.05" fill="rgb(238,236,239)"/><rect x="40" y="5.00" width="5" height="5.05" fill="rgb(235,233,238)"/><rect x="45" y="5.00" width="5" height="5.05" fill="rgb(229,232,230)"/><rect x="50" y="5.00" width="5" height="5.05" fill="rgb(193,194,200)"/><rect x="55" y="5.00" width="5" height="5.05" fill="rgb(221,224,227)"/></svg>
</body></html>
